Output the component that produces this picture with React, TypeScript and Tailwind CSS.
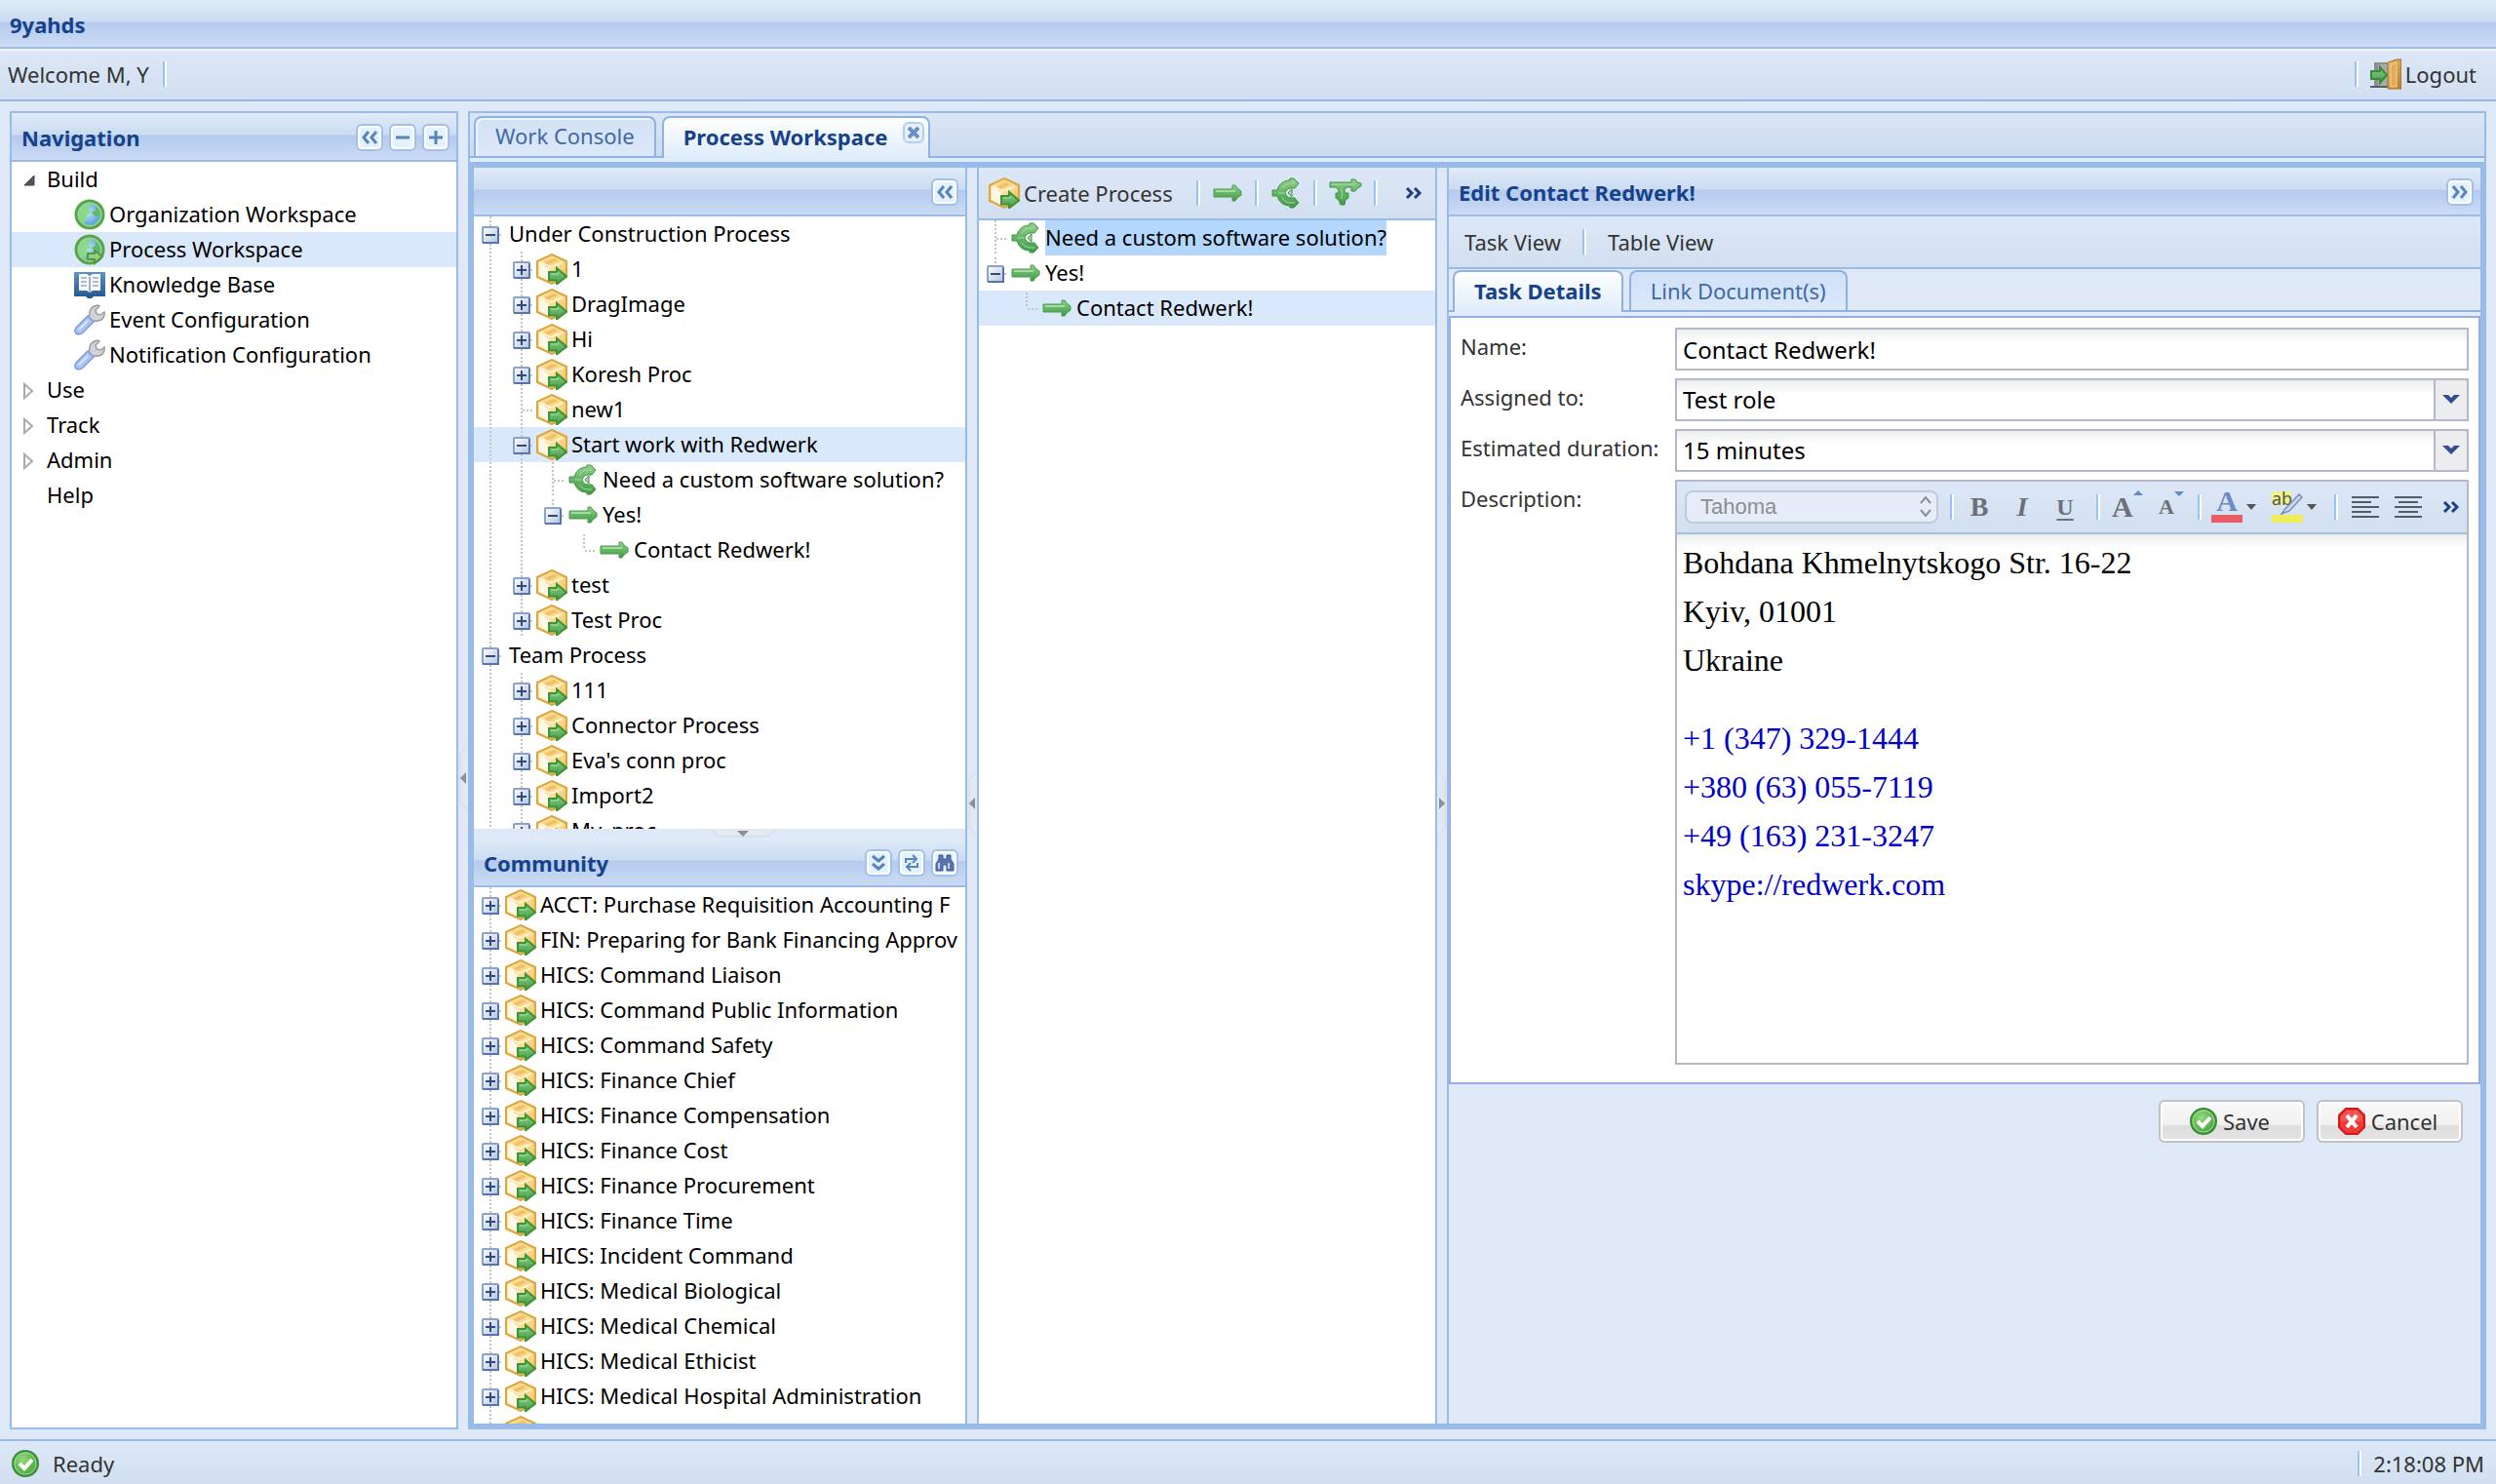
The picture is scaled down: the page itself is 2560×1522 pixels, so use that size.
import type { ReactNode } from "react";

type Guide = "line" | "blank" | "elbow" | "end" | "plus" | "minus" | "minusEnd";
type IconName = "process" | "split" | "arrow" | "globe" | "globeGo" | "book" | "wrench";

type Row = {
  label: string;
  guides: Guide[];
  icon?: IconName;
  active?: boolean;
  highlight?: boolean;
};

const HEADER_BG =
  "bg-[linear-gradient(to_bottom,#dfebf8_0%,#cbdcf2_46%,#b5caec_48%,#b9cef0_60%,#cbdbf4_100%)]";
const TOOLBAR_BG = "bg-[linear-gradient(to_bottom,#dce8f7,#d2dff0)]";

const processTree: Row[] = [
  { label: "Under Construction Process", guides: ["minus"] },
  { label: "1", guides: ["line", "plus"], icon: "process" },
  { label: "DragImage", guides: ["line", "plus"], icon: "process" },
  { label: "Hi", guides: ["line", "plus"], icon: "process" },
  { label: "Koresh Proc", guides: ["line", "plus"], icon: "process" },
  { label: "new1", guides: ["line", "elbow"], icon: "process" },
  { label: "Start work with Redwerk", guides: ["line", "minus"], icon: "process", active: true },
  { label: "Need a custom software solution?", guides: ["line", "line", "elbow"], icon: "split" },
  { label: "Yes!", guides: ["line", "line", "minusEnd"], icon: "arrow" },
  { label: "Contact Redwerk!", guides: ["line", "line", "blank", "end"], icon: "arrow" },
  { label: "test", guides: ["line", "plus"], icon: "process" },
  { label: "Test Proc", guides: ["line", "plus"], icon: "process" },
  { label: "Team Process", guides: ["minus"] },
  { label: "111", guides: ["line", "plus"], icon: "process" },
  { label: "Connector Process", guides: ["line", "plus"], icon: "process" },
  { label: "Eva's conn proc", guides: ["line", "plus"], icon: "process" },
  { label: "Import2", guides: ["line", "plus"], icon: "process" },
  { label: "My_proc", guides: ["line", "plus"], icon: "process" },
];

const communityTree: Row[] = [
  "ACCT: Purchase Requisition Accounting F",
  "FIN: Preparing for Bank Financing Approv",
  "HICS: Command Liaison",
  "HICS: Command Public Information",
  "HICS: Command Safety",
  "HICS: Finance Chief",
  "HICS: Finance Compensation",
  "HICS: Finance Cost",
  "HICS: Finance Procurement",
  "HICS: Finance Time",
  "HICS: Incident Command",
  "HICS: Medical Biological",
  "HICS: Medical Chemical",
  "HICS: Medical Ethicist",
  "HICS: Medical Hospital Administration",
  "HICS: Medical Legal",
].map((label) => ({ label, guides: ["plus"], icon: "process" }));

const taskTree: Row[] = [
  { label: "Need a custom software solution?", guides: ["elbow"], icon: "split", highlight: true },
  { label: "Yes!", guides: ["minusEnd"], icon: "arrow" },
  { label: "Contact Redwerk!", guides: ["blank", "end"], icon: "arrow", active: true },
];

const buildItems: { label: string; icon: IconName; active?: boolean }[] = [
  { label: "Organization Workspace", icon: "globe" },
  { label: "Process Workspace", icon: "globeGo", active: true },
  { label: "Knowledge Base", icon: "book" },
  { label: "Event Configuration", icon: "wrench" },
  { label: "Notification Configuration", icon: "wrench" },
];

/* Gradients shared by all the icons */
function IconDefs() {
  return (
    <svg width="0" height="0" className="absolute" aria-hidden="true">
      <defs>
        <linearGradient id="gGreen" x1="0" y1="0" x2="0" y2="1">
          <stop offset="0" stopColor="#8fd08a" />
          <stop offset="1" stopColor="#3f9a45" />
        </linearGradient>
        <linearGradient id="gBox" x1="0" y1="0" x2="1" y2="1">
          <stop offset="0" stopColor="#fdeebb" />
          <stop offset="0.5" stopColor="#fbdf98" />
          <stop offset="1" stopColor="#efb649" />
        </linearGradient>
        <linearGradient id="gExp" x1="0" y1="0" x2="1" y2="1">
          <stop offset="0" stopColor="#ffffff" />
          <stop offset="1" stopColor="#b3c4e2" />
        </linearGradient>
        <linearGradient id="gDoor" x1="0" y1="0" x2="1" y2="1">
          <stop offset="0" stopColor="#efc27a" />
          <stop offset="1" stopColor="#b97a26" />
        </linearGradient>
        <linearGradient id="gBook" x1="0" y1="0" x2="0" y2="1">
          <stop offset="0" stopColor="#5d93c6" />
          <stop offset="1" stopColor="#215591" />
        </linearGradient>
        <radialGradient id="gOk" cx="0.4" cy="0.35" r="0.7">
          <stop offset="0" stopColor="#8fdc7a" />
          <stop offset="1" stopColor="#3f9f38" />
        </radialGradient>
        <radialGradient id="gSea" cx="0.4" cy="0.4" r="0.7">
          <stop offset="0" stopColor="#c3e8f5" />
          <stop offset="1" stopColor="#4d96d6" />
        </radialGradient>
      </defs>
    </svg>
  );
}

function ProcessIcon() {
  return (
    <svg width="32" height="32" viewBox="0 0 32 32" className="shrink-0">
      <path d="M16 1 31 8v16l-15 7L1 24V8z" fill="url(#gBox)" stroke="#dca640" strokeWidth="2" />
      <path d="M3 10v13l10 5V14z" fill="#fff8e6" />
      <path d="M16 3 27 8l-11 5L5 8z" fill="#fbd98a" />
      <path d="M9 9l9-4 4 2-9 4v4l-4-2z" fill="#e9b45c" opacity="0.7" />
      <path d="M4 9l11 5 12-5" fill="none" stroke="#fff3cf" strokeWidth="2" />
      <path d="M13 19h8v-4l10 8.500-10 8v-4h-8z" fill="url(#gGreen)" stroke="#3f9337" strokeWidth="2" />
      <path d="M15 21h7v-2" fill="none" stroke="#a9dd9a" strokeWidth="1" />
    </svg>
  );
}

function SplitIcon() {
  return (
    <svg width="32" height="32" viewBox="0 0 32 32" className="shrink-0">
      <path
        d="M2 13h5C9 7 13 3 20 3V1h4l5 5-4 5h-4c-3 0-5 2-6 5 1 3 3 5 6 5h4l4 5-5 5h-4v-2C13 29 9 25 7 19H2z"
        fill="url(#gGreen)"
        stroke="#3f9246"
        strokeWidth="1"
      />
      <path d="M8 16h7M12 11c2-3 5-5 9-5h4M12 21c2 3 5 5 9 5h4" fill="none" stroke="#a4dca0" strokeWidth="1" />
      <path d="M18 16l4-4v8z" fill="#a4dca0" stroke="#3f9246" strokeWidth="1" />
    </svg>
  );
}

function ArrowIcon() {
  return (
    <svg width="32" height="32" viewBox="0 0 32 32" className="shrink-0">
      <path
        d="M2 12h19V8h3l2 3 4 3v4l-4 3-2 3h-3v-4H2z"
        fill="url(#gGreen)"
        stroke="#4a9c4f"
        strokeWidth="1"
      />
      <path d="M4 14h20" stroke="#a4dca0" strokeWidth="2" />
    </svg>
  );
}

function MergeIcon() {
  return (
    <svg width="34" height="32" viewBox="0 0 34 32" className="shrink-0">
      <path
        d="M1 5h22V2h4l2 3 4 1v3l-4 2-2 3h-4v-4h-5c-2 1-2 3-2 6h4v5l-3 2-1 5h-4l-2-5-3-2v-5h3c0-3-1-5-3-6H1z"
        fill="url(#gGreen)"
        stroke="#3f9246"
        strokeWidth="1"
      />
      <path d="M3 7h25M12 12c2 2 2 6 1 10" fill="none" stroke="#a4dca0" strokeWidth="1" />
    </svg>
  );
}

function GlobeIcon({ go }: { go?: boolean }) {
  return (
    <svg width="32" height="32" viewBox="0 0 32 32" className="shrink-0">
      <circle cx="16" cy="16" r="14" fill="#9bdc8f" stroke="#57a64c" strokeWidth="3" />
      <circle cx="16" cy="16" r="11" fill="url(#gSea)" />
      <path d="M6 12c3-6 8-7 11-6l-2 5 2 3-5 3 1 4-3 4c-4-3-6-8-4-13z" fill="#86da80" opacity="0.9" />
      <path d="M22 8c3 2 5 5 5 9l-5 1-4-4 4-2z" fill="#5cbd60" />
      {go && (
        <path d="M14 20h7v-3l8 6-8 7v-4h-7z" fill="#9ccb7d" stroke="#4d9a42" strokeWidth="2" />
      )}
    </svg>
  );
}

function BookIcon() {
  return (
    <svg width="32" height="32" viewBox="0 0 32 32" className="shrink-0">
      <path d="M0 3h32v25H20l-2 2h-4l-2-2H0z" fill="url(#gBook)" />
      <path d="M5 5h8l3 2 3-2h8v17h-8l-3 2-3-2H5z" fill="#f7f9fc" />
      <path d="M16 8v15" stroke="#9fb0c4" strokeWidth="2" />
      <path d="M7 9h6M7 13h6M7 17h6M19 9h6M19 13h6M19 17h6" stroke="#b5bcc7" strokeWidth="2" />
    </svg>
  );
}

function WrenchIcon() {
  return (
    <svg width="32" height="32" viewBox="0 0 32 32" className="shrink-0">
      <path
        d="M16 11c-1-5 2-9 8-10l2 1-4 4 1 4 4 1 4-3c1 6-3 10-10 9l-3 2-5-5z"
        fill="#d2d3d6"
        stroke="#9c9da2"
        strokeWidth="1.500"
      />
      <path
        d="M14 12l6 6L9 29c-2 2-5 2-7 1-2-2-1-5 1-7z"
        fill="#a9c4f5"
        stroke="#7d9bdb"
        strokeWidth="1.500"
      />
      <path d="M14 17 5 26" stroke="#dbe7ff" strokeWidth="2" />
    </svg>
  );
}

function OkIcon() {
  return (
    <svg width="28" height="28" viewBox="0 0 28 28" className="shrink-0">
      <circle cx="14" cy="14" r="13" fill="url(#gOk)" stroke="#3b8b37" strokeWidth="2" />
      <circle cx="14" cy="14" r="11" fill="none" stroke="#a7dd98" strokeWidth="1" />
      <path d="M8 14l5 5 8-9" fill="none" stroke="#fff" strokeWidth="4" />
    </svg>
  );
}

function CancelIcon() {
  return (
    <svg width="28" height="28" viewBox="0 0 28 28" className="shrink-0">
      <path d="M8 1h12l7 7v12l-7 7H8l-7-7V8z" fill="#ee3b35" stroke="#d6161a" strokeWidth="2" />
      <path d="M9 3h10l6 6v5H3V9z" fill="#fff" opacity="0.15" />
      <path d="M9 8l10 12M19 8 9 20" stroke="#fff" strokeWidth="4" />
    </svg>
  );
}

function DoorIcon() {
  return (
    <svg width="32" height="32" viewBox="0 0 32 32" className="shrink-0">
      <path d="M4 4h16v26H4z" fill="#8a8d92" />
      <path d="M8 6h12v22H8z" fill="#a9abae" />
      <path d="M0 28h20v2H0z" fill="#5b5e63" />
      <path d="M18 4 27 1h5v30H18z" fill="url(#gDoor)" stroke="#a66d22" strokeWidth="1" />
      <path d="M21 7l6-3v25h-6z" fill="#e2ac5c" stroke="#f3d08f" strokeWidth="1" />
      <path d="M1 13h9V9l7 8-7 8v-4H1z" fill="url(#gGreen)" stroke="#3b8b37" strokeWidth="2" />
    </svg>
  );
}

function TreeIcon({ name }: { name: IconName }) {
  if (name === "process") return <ProcessIcon />;
  if (name === "split") return <SplitIcon />;
  if (name === "arrow") return <ArrowIcon />;
  if (name === "book") return <BookIcon />;
  if (name === "wrench") return <WrenchIcon />;
  return <GlobeIcon go={name === "globeGo"} />;
}

/* Dotted tree lines, with the +/- box where the node has children */
function GuideCell({ kind }: { kind: Guide }) {
  const box = kind === "plus" || kind === "minus" || kind === "minusEnd";
  const half = kind === "end" || kind === "minusEnd";
  const dots = { stroke: "#c4c4c4", strokeWidth: 2, strokeDasharray: "2 2" };
  return (
    <svg width="32" height="36" viewBox="0 0 32 36" className="shrink-0">
      {kind !== "blank" && <path d={half ? "M17 2V18" : "M17 0V36"} {...dots} />}
      {kind !== "blank" && kind !== "line" && <path d="M18 19H30" {...dots} />}
      {box && (
        <>
          <rect x="9" y="11" width="16" height="16" rx="1" fill="url(#gExp)" stroke="#8ba1c8" strokeWidth="2" />
          <path d="M9 27H25V12" fill="none" stroke="#5a74a4" strokeWidth="2" />
          <path d="M12 19H22" stroke="#2f4a7c" strokeWidth="2" />
          {kind === "plus" && <path d="M17 14V24" stroke="#2f4a7c" strokeWidth="2" />}
        </>
      )}
    </svg>
  );
}

function Tree({ rows, label }: { rows: Row[]; label: string }) {
  return (
    <ul role="tree" aria-label={label} className="min-h-0 flex-1 overflow-hidden bg-white text-black">
      {rows.map((row) => (
        <li
          key={row.label}
          role="treeitem"
          aria-selected={!!row.active}
          className={`flex h-9 items-center whitespace-nowrap ${row.active ? "bg-[#d9e8fb]" : ""}`}
        >
          {row.guides.map((kind, i) => (
            <GuideCell key={i} kind={kind} />
          ))}
          {row.icon && <TreeIcon name={row.icon} />}
          <span className={`ml-1 pb-[2px] leading-[34px] ${row.highlight ? "bg-[#b3d7fd]" : ""}`}>
            {row.label}
          </span>
        </li>
      ))}
    </ul>
  );
}

function ToolButton({ label, children }: { label: string; children: ReactNode }) {
  return (
    <button
      type="button"
      aria-label={label}
      className="flex size-7 items-center justify-center rounded-md border-2 border-[#a3c0e8] bg-[#e4f1fe] shadow-[inset_0_0_0_2px_#ffffff]"
    >
      <svg width="20" height="20" viewBox="0 0 20 20" fill="none" stroke="#5585bb" strokeWidth="3">
        {children}
      </svg>
    </button>
  );
}

const collapseLeft = <path d="M9 4 4 10l5 6M17 4l-5 6 5 6" />;
const collapseRight = <path d="M3 4l5 6-5 6M11 4l5 6-5 6" />;

function PanelHeader({ title, children }: { title?: string; children?: ReactNode }) {
  return (
    <header
      className={`flex h-[50px] shrink-0 items-center gap-[6px] border-b-2 border-[#99bbe8] pt-[2px] pr-[7px] pl-[10px] font-bold text-[#15428b] ${HEADER_BG}`}
    >
      <h2 className="flex-1 leading-7">{title}</h2>
      {children}
    </header>
  );
}

function Separator() {
  return <span className="h-[26px] w-1 shrink-0 border-r-2 border-l-2 border-r-white border-l-[#98c4f4]" />;
}

function Splitter({ direction }: { direction: "left" | "right" }) {
  return (
    <div className="flex w-[10px] shrink-0 items-center justify-center bg-[#dfe8f6] pt-4">
      <svg width="10" height="68" viewBox="0 0 10 68">
        {direction === "left" ? (
          <>
            <path d="M10 1 2 9v50l8 8" fill="#e3e9f2" stroke="#d3d8e0" />
            <path d="M8 28v12l-6-6z" fill="#8b8f96" />
          </>
        ) : (
          <>
            <path d="M0 1l8 8v50l-8 8" fill="#e3e9f2" stroke="#d3d8e0" />
            <path d="M2 28v12l6-6z" fill="#8b8f96" />
          </>
        )}
      </svg>
    </div>
  );
}

function Navigation() {
  return (
    <nav aria-label="Navigation" className="flex w-[460px] shrink-0 flex-col border-2 border-[#99bbe8] bg-white">
      <PanelHeader title="Navigation">
        <ToolButton label="Collapse panel">{collapseLeft}</ToolButton>
        <ToolButton label="Collapse all">
          <path d="M3 10h14" />
        </ToolButton>
        <ToolButton label="Expand all">
          <path d="M3 10h14M10 3v14" />
        </ToolButton>
      </PanelHeader>
      <ul className="leading-[34px] text-black">
        <li className="flex h-9 items-center">
          <svg width="32" height="36" viewBox="0 0 32 36" className="shrink-0">
            <path d="M23 14v10H13z" fill="#555" stroke="#444" strokeWidth="1" />
          </svg>
          <span className="ml-1 pb-[2px]">Build</span>
        </li>
        {buildItems.map((item) => (
          <li key={item.label} className={item.active ? "bg-[#d9e8fb]" : ""}>
            <a href="#" className="flex h-9 items-center gap-1 pl-16">
              <TreeIcon name={item.icon} />
              <span className="pb-[2px]">{item.label}</span>
            </a>
          </li>
        ))}
        {["Use", "Track", "Admin"].map((label) => (
          <li key={label} className="flex h-9 items-center">
            <svg width="32" height="36" viewBox="0 0 32 36" className="shrink-0">
              <path d="M13 12v14l8-7z" fill="#fff" stroke="#ababab" strokeWidth="2" />
            </svg>
            <span className="ml-1 pb-[2px]">{label}</span>
          </li>
        ))}
        <li className="flex h-9 items-center pl-9">
          <a href="#" className="pb-[2px]">
            Help
          </a>
        </li>
      </ul>
    </nav>
  );
}

function ProcessPanel() {
  return (
    <section className="flex w-[506px] shrink-0 flex-col border-r-2 border-[#99bbe8]">
      <PanelHeader>
        <ToolButton label="Collapse panel">{collapseLeft}</ToolButton>
      </PanelHeader>
      <Tree rows={processTree} label="Processes" />
      <div className="flex h-[10px] shrink-0 justify-center bg-[#dfe8f6] pl-12">
        <svg width="68" height="10" viewBox="0 0 68 10">
          <path d="M1 0l8 8h50l8-8" fill="#e3e9f2" stroke="#d3d8e0" />
          <path d="M28 2h12l-6 6z" fill="#8b8f96" />
        </svg>
      </div>
      <div className="flex h-[600px] shrink-0 flex-col">
        <PanelHeader title="Community">
          <ToolButton label="Expand all">
            <path d="M4 3l6 5 6-5M4 11l6 5 6-5" />
          </ToolButton>
          <ToolButton label="Refresh">
            <path d="M4 10V6h10M11 2l4 4-4 4M16 10v4H6M9 10l-4 4 4 4" strokeWidth="2" />
          </ToolButton>
          <ToolButton label="Search">
            <path d="M4 2h4v4h4V2h4v4l3 5v7h-7v-6H8v6H1v-7l3-5z" fill="#5a74ad" stroke="#3f5a94" strokeWidth="1" />
            <path d="M4 10v6M14 10v6" stroke="#c5d3ee" strokeWidth="2" />
          </ToolButton>
        </PanelHeader>
        <Tree rows={communityTree} label="Community processes" />
      </div>
    </section>
  );
}

function MoreIcon() {
  return (
    <svg width="18" height="14" viewBox="0 0 18 14" fill="none" stroke="#1f3f7f" strokeWidth="3">
      <path d="M2 2l5 5-5 5M10 2l5 5-5 5" />
    </svg>
  );
}

function TaskPanel() {
  return (
    <section className="flex w-[472px] shrink-0 flex-col border-r-2 border-l-2 border-[#99bbe8] bg-white">
      <div
        className={`flex h-[54px] shrink-0 items-center border-b-2 border-[#99bbe8] pl-[10px] text-[#333] ${TOOLBAR_BG}`}
      >
        <button type="button" className="mr-6 flex items-center gap-1">
          <ProcessIcon />
          Create Process
        </button>
        <Separator />
        <button type="button" aria-label="Add task" className="mx-3">
          <ArrowIcon />
        </button>
        <Separator />
        <button type="button" aria-label="Add split" className="mx-3">
          <SplitIcon />
        </button>
        <Separator />
        <button type="button" aria-label="Add merge" className="mx-3">
          <MergeIcon />
        </button>
        <Separator />
        <button type="button" aria-label="More" className="mr-[13px] ml-auto">
          <MoreIcon />
        </button>
      </div>
      <Tree rows={taskTree} label="Tasks" />
    </section>
  );
}

const FIELD =
  "h-11 w-full rounded-none border-2 border-[#b5b8c8] bg-white bg-[linear-gradient(to_bottom,#eceeee_0,#ffffff_14px)] px-[6px] text-2xl text-black";

function Combo({ id, value }: { id: string; value: string }) {
  return (
    <div className="relative">
      <select id={id} defaultValue={value} className={`appearance-none ${FIELD}`}>
        <option>{value}</option>
      </select>
      <span className="pointer-events-none absolute inset-y-0 right-0 flex w-9 items-center justify-center rounded-tr border-2 border-[#b5b8c8] bg-[#ededf0]">
        <svg width="20" height="14" viewBox="0 0 20 14">
          <path d="M1 2h6l3 3 3-3h6l-9 9z" fill="#2f4f8f" />
        </svg>
      </span>
    </div>
  );
}

function EditorToolbar() {
  return (
    <div
      className={`flex h-[54px] shrink-0 items-center border-b-2 border-[#a9bfd3] font-["Liberation_Serif",serif] font-bold text-[#6b7079] ${TOOLBAR_BG}`}
    >
      <div className="relative ml-2">
        <select
          aria-label="Font"
          className='h-[34px] w-[260px] appearance-none rounded-lg border-2 border-[#c3cbdb] bg-[#e7edf8] pl-[14px] font-["Liberation_Sans",sans-serif] text-[22px] leading-7 font-normal text-[#8b8d92]'
        >
          <option>Tahoma</option>
        </select>
        <svg
          width="14"
          height="24"
          viewBox="0 0 14 24"
          fill="none"
          stroke="#8b8d92"
          strokeWidth="2"
          className="pointer-events-none absolute top-[5px] right-[6px]"
        >
          <path d="M2 8l5-6 5 6M2 15l5 6 5-6" />
        </svg>
      </div>
      <span className="ml-3 flex">
        <Separator />
      </span>
      <button type="button" className="ml-[10px] w-8 text-[28px] leading-8">
        B
      </button>
      <button type="button" className="ml-3 w-8 text-[28px] leading-8 italic">
        I
      </button>
      <button type="button" className="ml-3 w-8 text-[24px] leading-8 underline underline-offset-4">
        U
      </button>
      <span className="ml-4 flex">
        <Separator />
      </span>
      <button type="button" aria-label="Grow text" className="ml-3 flex w-8 items-start">
        <span className="text-[30px] leading-9">A</span>
        <svg width="10" height="6" viewBox="0 0 10 6" className="shrink-0">
          <path d="M0 6l5-5 5 5z" fill="#5f8bc7" />
        </svg>
      </button>
      <button type="button" aria-label="Shrink text" className="ml-4 flex w-7 items-start">
        <span className="text-[22px] leading-10">A</span>
        <svg width="10" height="6" viewBox="0 0 10 6" className="mt-1 shrink-0">
          <path d="M0 0h10L5 5z" fill="#5f8bc7" />
        </svg>
      </button>
      <span className="ml-3 flex">
        <Separator />
      </span>
      <button type="button" aria-label="Font colour" className="ml-[10px] flex items-center gap-1">
        <span className="flex h-8 w-8 items-end justify-center border-b-8 border-[#e85d64] text-[30px] leading-7 text-[#6d8bc4]">
          A
        </span>
        <svg width="10" height="7" viewBox="0 0 10 7">
          <path d="M0 0h10L5 6z" fill="#555" />
        </svg>
      </button>
      <button type="button" aria-label="Highlight colour" className="ml-4 flex items-center gap-1">
        <svg width="32" height="32" viewBox="0 0 32 32">
          <rect width="20" height="14" fill="#eef08a" />
          <rect y="24" width="32" height="8" fill="#eded5a" />
          <text x="0" y="14" fontSize="18" fontFamily="Noto Sans, sans-serif" fontWeight="400" fill="#555">
            ab
          </text>
          <path d="M28 3l3 3-13 14-8 3 3-4z" fill="#c9d8ee" stroke="#7d93b8" strokeWidth="1.500" />
        </svg>
        <svg width="10" height="7" viewBox="0 0 10 7">
          <path d="M0 0h10L5 6z" fill="#555" />
        </svg>
      </button>
      <span className="ml-[18px] flex">
        <Separator />
      </span>
      <button type="button" aria-label="Align left" className="ml-[14px]">
        <svg width="28" height="24" viewBox="0 0 28 24" stroke="#555b66" strokeWidth="2">
          <path d="M0 2h28M0 7h20M0 12h28M0 17h20M0 22h28" />
        </svg>
      </button>
      <button type="button" aria-label="Align center" className="ml-4">
        <svg width="28" height="24" viewBox="0 0 28 24" stroke="#555b66" strokeWidth="2">
          <path d="M0 2h28M4 7h20M0 12h28M4 17h20M0 22h28" />
        </svg>
      </button>
      <button type="button" aria-label="More" className="mr-[7px] ml-auto">
        <MoreIcon />
      </button>
    </div>
  );
}

function FormRow({ id, label, children }: { id: string; label: string; children: ReactNode }) {
  return (
    <div className="flex">
      <label htmlFor={id} className="w-[220px] shrink-0 pt-[3px] leading-8">
        {label}
      </label>
      <div className="min-w-0 flex-1">{children}</div>
    </div>
  );
}

function ActionButton({ children }: { children: ReactNode }) {
  return (
    <button
      type="button"
      className="flex h-11 w-[150px] items-center justify-center gap-[6px] rounded-md border-2 border-[#bfc2c6] bg-[linear-gradient(to_bottom,#f8f8f8_0%,#f1f1f1_58%,#dedede_62%,#e4e4e4_100%)] pr-1 text-[#333] shadow-[inset_0_0_0_2px_#ffffff]"
    >
      {children}
    </button>
  );
}

function EditPanel() {
  return (
    <section className="flex min-w-0 flex-1 flex-col border-l-2 border-[#99bbe8] bg-[#dfe8f6]">
      <PanelHeader title="Edit Contact Redwerk!">
        <ToolButton label="Collapse panel">{collapseRight}</ToolButton>
      </PanelHeader>
      <div
        className={`flex h-[54px] shrink-0 items-center gap-[22px] border-b-2 border-[#99bbe8] pl-4 text-[#333] ${TOOLBAR_BG}`}
      >
        <button type="button">Task View</button>
        <Separator />
        <button type="button">Table View</button>
      </div>
      <div role="tablist" className="flex h-11 shrink-0 items-end gap-[6px] border-b-2 border-[#8db2e3] px-1">
        <button
          type="button"
          role="tab"
          aria-selected="true"
          className="-mb-[2px] h-[43px] rounded-t-lg border-2 border-b-0 border-[#8db2e3] bg-linear-to-b from-white to-[#deecfb] px-5 pb-1 font-bold text-[#15428b]"
        >
          Task Details
        </button>
        <button
          type="button"
          role="tab"
          aria-selected="false"
          className="h-[41px] rounded-t-lg border-2 border-b-0 border-[#8db2e3] bg-linear-to-b from-[#cfe0f9] to-[#dce9fa] px-5 pb-[2px] text-[#416aa3]"
        >
          Link Document(s)
        </button>
      </div>
      <div className="h-1 shrink-0 bg-[#deecfb]" />
      <form className="flex shrink-0 flex-col gap-2 border-2 border-[#99aee0] bg-white pt-[10px] pr-[10px] pb-[18px] pl-[10px] text-[#333]">
        <FormRow id="task-name" label="Name:">
          <input id="task-name" type="text" defaultValue="Contact Redwerk!" className={FIELD} />
        </FormRow>
        <FormRow id="assigned" label="Assigned to:">
          <Combo id="assigned" value="Test role" />
        </FormRow>
        <FormRow id="duration" label="Estimated duration:">
          <Combo id="duration" value="15 minutes" />
        </FormRow>
        <FormRow id="description" label="Description:">
          <div className="flex h-[600px] flex-col border-2 border-[#b5b8c8]">
            <EditorToolbar />
            <div
              id="description"
              role="textbox"
              aria-label="Description"
              className='flex-1 bg-[linear-gradient(to_bottom,#eceeee_0,#ffffff_14px)] px-[6px] pt-1 font-["Liberation_Serif",serif] text-[32px] leading-[50px] text-black'
            >
              <p>
                Bohdana Khmelnytskogo Str. 16-22
                <br />
                Kyiv, 01001
                <br />
                Ukraine
              </p>
              <p className="mt-[30px] flex flex-col items-start text-[#0000cc]">
                <a href="tel:+13473291444">+1 (347) 329-1444</a>
                <a href="tel:+380630557119">+380 (63) 055-7119</a>
                <a href="tel:+491632313247">+49 (163) 231-3247</a>
                <a href="skype://redwerk.com">skype://redwerk.com</a>
              </p>
            </div>
          </div>
        </FormRow>
      </form>
      <div className="flex justify-end gap-3 py-4 pr-[18px]">
        <ActionButton>
          <OkIcon />
          Save
        </ActionButton>
        <ActionButton>
          <CancelIcon />
          Cancel
        </ActionButton>
      </div>
    </section>
  );
}

function Workspace() {
  return (
    <main className="flex min-w-0 flex-1 flex-col border-2 border-[#99bbe8]">
      <div
        role="tablist"
        className="flex h-[46px] shrink-0 items-end gap-[6px] border-b-2 border-[#8db2e3] bg-linear-to-b from-[#dbe6f5] to-[#ccdaf1] px-1"
      >
        <button
          type="button"
          role="tab"
          aria-selected="false"
          className="h-[41px] rounded-t-lg border-2 border-b-0 border-[#8db2e3] bg-linear-to-b from-[#d3e1f5] to-[#dce9fa] px-5 pb-1 text-[#416aa3] shadow-[inset_2px_2px_0_#edf4fd]"
        >
          Work Console
        </button>
        <div className="-mb-[2px] flex h-[43px] gap-4 rounded-t-lg border-2 border-b-0 border-[#8db2e3] bg-linear-to-b from-white to-[#deecfb] pr-1 pl-5">
          <button type="button" role="tab" aria-selected="true" className="pb-1 font-bold text-[#15428b]">
            Process Workspace
          </button>
          <button
            type="button"
            aria-label="Close tab"
            className="mt-1 flex size-[22px] items-center justify-center rounded-md border-2 border-[#b3cdec] bg-[#e6f0fc]"
          >
            <svg width="12" height="12" viewBox="0 0 12 12">
              <path d="M1 1l10 10M11 1 1 11" stroke="#6b8fc4" strokeWidth="4" />
            </svg>
          </button>
        </div>
      </div>
      <div className="h-1 shrink-0 bg-[#deecfb]" />
      <div className="flex min-h-0 flex-1 border-4 border-t-[6px] border-[#99bbe8]">
        <ProcessPanel />
        <Splitter direction="left" />
        <TaskPanel />
        <Splitter direction="right" />
        <EditPanel />
      </div>
    </main>
  );
}

export default function App() {
  return (
    <div className='flex h-screen flex-col overflow-hidden bg-[#dfe8f6] font-["Noto_Sans","Open_Sans",sans-serif] text-[22px] leading-[30px]'>
      <IconDefs />
      <header className={`flex h-[50px] shrink-0 items-center border-b-2 border-[#99bbe8] pt-[2px] pl-[10px] ${HEADER_BG}`}>
        <h1 className="font-bold text-[#15428b]">9yahds</h1>
      </header>
      <div
        className={`flex h-[54px] shrink-0 items-center border-b-2 border-[#99b5e0] pl-2 text-[#333] shadow-[inset_0_2px_0_#f1f3f8] ${TOOLBAR_BG}`}
      >
        <span className="mr-[14px]">Welcome M, Y</span>
        <Separator />
        <span className="mr-3 ml-auto flex">
          <Separator />
        </span>
        <button type="button" className="mr-5 flex items-center gap-1">
          <DoorIcon />
          Logout
        </button>
      </div>
      <div className="flex min-h-0 flex-1 p-[10px]">
        <Navigation />
        <Splitter direction="left" />
        <Workspace />
      </div>
      <footer
        className={`flex h-[46px] shrink-0 items-center border-t-2 border-[#99bbe8] pt-[2px] pr-3 pl-3 text-[#333] ${TOOLBAR_BG}`}
      >
        <OkIcon />
        <span className="ml-[14px] flex-1">Ready</span>
        <Separator />
        <time className="ml-3">2:18:08 PM</time>
      </footer>
    </div>
  );
}
